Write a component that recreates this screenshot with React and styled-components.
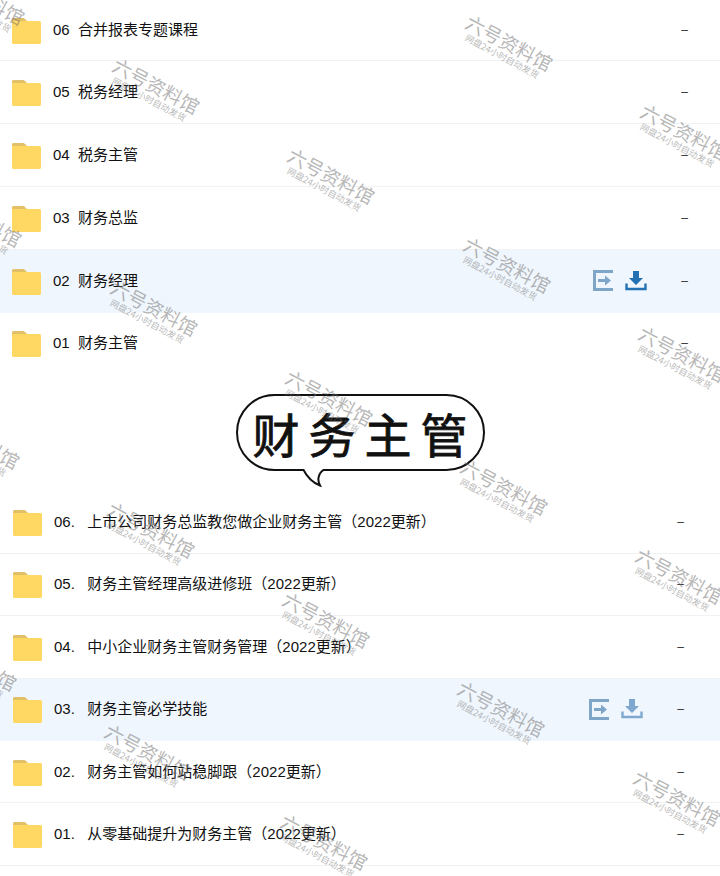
import React from 'react'
import styled, { createGlobalStyle } from 'styled-components'

const topFolders = [
    { id: 1, name: '06  合并报表专题课程' },
    { id: 2, name: '05  税务经理' },
    { id: 3, name: '04  税务主管' },
    { id: 4, name: '03  财务总监' },
    { id: 5, name: '02  财务经理', active: true, strongDownload: true },
    { id: 6, name: '01  财务主管', last: true },
]

const bottomFolders = [
    { id: 1, name: '06.   上市公司财务总监教您做企业财务主管（2022更新）' },
    { id: 2, name: '05.   财务主管经理高级进修班（2022更新）' },
    { id: 3, name: '04.   中小企业财务主管财务管理（2022更新）' },
    { id: 4, name: '03.   财务主管必学技能', active: true },
    { id: 5, name: '02.   财务主管如何站稳脚跟（2022更新）' },
    { id: 6, name: '01.   从零基础提升为财务主管（2022更新）' },
]

// the watermark repeats on a slanted grid
const watermarks = []
for (let k = -1; k <= 3; k++) {
    for (let j = 0; j <= 4; j++) {
        const x = -21 - 2.6 * k + 175.2 * j
        const y = 1 + 222 * k + 89.3 * j
        if (y > -30 && y < 910 && x < 770) watermarks.push({ id: `${k}-${j}`, x, y })
    }
}

const FolderIcon = () => (
    <FolderSvg viewBox="0 0 29 26">
        <path d="M0 1.5C0 .7.7 0 1.5 0H11c.8 0 1.4.3 2 1l2 2H0z" fill="#e2c068" />
        <path d="M0 3h27.5c.8 0 1.5.7 1.5 1.5v20c0 .8-.7 1.5-1.5 1.5h-26C.7 26 0 25.3 0 24.5z" fill="#ffd864" />
    </FolderSvg>
)

const TransferIcon = () => (
    <svg width="20" height="21" viewBox="0 0 20 21">
        <path d="M20 1.5H1.5v18H20" fill="none" stroke="#7fa5c9" strokeWidth="3" />
        <path d="M5 9h7V5.5l6 5-6 5V12H5z" fill="#7fa5c9" />
    </svg>
)

const DownloadIcon = ({ strong }) => (
    <svg width="22" height="20" viewBox="0 0 22 20">
        <path d="M8 0h6v7h4l-7 7-7-7h4z" fill={strong ? '#2272b4' : '#7fa8d0'} />
        <path d="M1.5 12.500v5.500h19v-5.500" fill="none" stroke={strong ? '#2272b4' : '#7fa8d0'} strokeWidth="2.4" />
    </svg>
)

const FolderList = ({ items, inset, rowHeight, dashRight, iconRight }) => (
    <List>
        {items.map((item) => (
            <Row
                key={item.id}
                $active={item.active}
                $last={item.last}
                $inset={inset}
                $height={rowHeight}
                $dashRight={dashRight}
            >
                <FolderIcon />
                <Name>{item.name}</Name>
                {item.active && (
                    <Actions $right={iconRight}>
                        <TransferIcon />
                        <DownloadIcon strong={item.strongDownload} />
                    </Actions>
                )}
                <Dash>–</Dash>
            </Row>
        ))}
    </List>
)

const App = () => (
    <Page>
        <GlobalStyle />
        <TopSection>
            <FolderList items={topFolders} inset={12} rowHeight={62.8} dashRight={32} iconRight={34} />
        </TopSection>

        <TitleSection>
            <Bubble>
                财务主管
                <BubbleTail viewBox="0 0 26 18">
                    <path d="M1 0c3 6 8 13 17 16.500C15 11 16 4 23 0z" fill="#fff" />
                    <path d="M1 0c3 6 8 13 17 16.500C15 11 16 4 23 0" fill="none" stroke="#111" strokeWidth="2" />
                </BubbleTail>
            </Bubble>
        </TitleSection>

        <FolderList items={bottomFolders} inset={13} rowHeight={62.4} dashRight={36} iconRight={34} />

        <WatermarkLayer>
            {watermarks.map((w) => (
                <Watermark key={w.id} style={{ left: w.x, top: w.y }}>
                    <WatermarkTitle>六号资料馆</WatermarkTitle>
                    <WatermarkNote>网盘24小时自动发货</WatermarkNote>
                </Watermark>
            ))}
        </WatermarkLayer>
    </Page>
)

const GlobalStyle = createGlobalStyle`
    html, body {
        margin: 0;
        padding: 0;
        background: #fff;
        overflow: hidden;
    }
`;

const Page = styled.div`
    position: relative;
    width: 720px;
    height: 876px;
    overflow: hidden;
    background: #fff;
    font-family: "Liberation Sans", "Noto Sans CJK SC", sans-serif;
    color: #111;
`;

const TopSection = styled.div`
    margin-top: -1.4px;
`;

const List = styled.div`
    display: flex;
    flex-direction: column;
`;

const Row = styled.div`
    position: relative;
    display: flex;
    align-items: center;
    height: ${(p) => p.$height}px;
    box-sizing: border-box;
    padding-left: ${(p) => p.$inset}px;
    padding-right: ${(p) => p.$dashRight}px;
    background: ${(p) => (p.$active ? '#f0f6fd' : '#fff')};
    border-bottom: 1px solid ${(p) => (p.$last || p.$active ? 'transparent' : '#f1f2f4')};
`;

const FolderSvg = styled.svg`
    width: 29px;
    height: 26px;
    flex-shrink: 0;
    margin-top: 2px;
`;

const Name = styled.span`
    margin-left: 12px;
    font-size: 15px;
    line-height: 20px;
    white-space: pre;
    flex: 1;
`;

const Actions = styled.div`
    display: flex;
    align-items: center;
    gap: 12px;
    margin-right: ${(p) => p.$right}px;
`;

const Dash = styled.span`
    width: 7px;
    font-size: 12px;
    color: #333;
    text-align: center;
`;

const TitleSection = styled.div`
    display: flex;
    justify-content: center;
    padding-top: 19px;
    height: 116px;
    box-sizing: border-box;
`;

const Bubble = styled.div`
    position: relative;
    width: 249px;
    height: 77px;
    box-sizing: border-box;
    border: 2px solid #111;
    border-radius: 39px;
    display: flex;
    align-items: center;
    justify-content: center;
    font-family: "Noto Sans CJK SC", sans-serif;
    font-size: 47px;
    letter-spacing: 9px;
    padding-left: 9px;
    color: #111;
    -webkit-text-stroke: 0.8px #111;
`;

const BubbleTail = styled.svg`
    position: absolute;
    left: 64px;
    top: 73px;
    width: 26px;
    height: 18px;
`;

const WatermarkLayer = styled.div`
    position: absolute;
    inset: 0;
    pointer-events: none;
`;

const Watermark = styled.div`
    position: absolute;
    width: 100px;
    display: flex;
    flex-direction: column;
    align-items: center;
    transform: translate(-50%, -50%) rotate(28deg);
    font-family: "Noto Sans CJK SC", sans-serif;
    color: rgba(110, 110, 110, 0.5);
`;

const WatermarkTitle = styled.div`
    font-size: 19px;
    line-height: 21px;
    white-space: nowrap;
`;

const WatermarkNote = styled.div`
    font-size: 9px;
    line-height: 11px;
    white-space: nowrap;
`;

export default App
